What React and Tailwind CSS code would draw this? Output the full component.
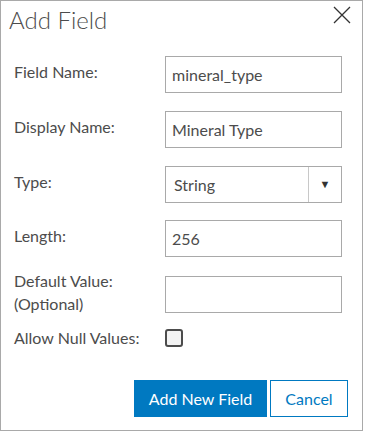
import React, { useState } from "react";

function Row({ label, children, className = "" }) {
  return (
    <div className={`flex items-center h-[37px] ${className}`}>
      <label className="w-[164px] shrink-0 pb-[6px] pl-[13px] text-[16px] leading-[23px] text-[#4c4c4c]">
        {label}
      </label>
      {children}
    </div>
  );
}

function TextInput({ value }) {
  return (
    <input
      type="text"
      defaultValue={value}
      className="w-[177px] h-[37px] border border-[#a9a9a9] bg-white px-[6px] text-[16px] text-[#4c4c4c] outline-none"
    />
  );
}

export default function App() {
  const [allowNull, setAllowNull] = useState(false);

  return (
    <div
      className="w-[363px] h-[431px] bg-white border border-[#a9a9a9] relative"
      style={{ fontFamily: "Lato, 'Open Sans', sans-serif" }}
    >
      <div className="flex items-start justify-between h-[35px]">
        <h2 className="pl-[8px] pt-[3px] text-[24px] leading-[32px] text-[#4c4c4c] font-light">
          Add Field
        </h2>
        <button className="mr-[10px] mt-[4px] text-[#4c4c4c]">
          <svg width="20" height="20" viewBox="0 0 20 20" fill="none" stroke="#333" strokeWidth="1.3">
            <path d="M2 2 L18 18 M18 2 L2 18" />
          </svg>
        </button>
      </div>

      <div className="mt-[20px] flex flex-col">
        <Row label="Field Name:">
          <TextInput value="mineral_type" />
        </Row>
        <Row label="Display Name:" className="mt-[18px]">
          <TextInput value="Mineral Type" />
        </Row>
        <Row label="Type:" className="mt-[18px]">
          <div className="w-[177px] h-[37px] border border-[#a9a9a9] flex text-[16px] text-[#4c4c4c]">
            <div className="flex-1 flex items-center px-[8px]">String</div>
            <div className="w-[33px] border-l border-[#c8c8c8] flex items-center justify-center text-[11px] text-[#333]">
              ▼
            </div>
          </div>
        </Row>
        <Row label="Length:" className="mt-[17px]">
          <TextInput value="256" />
        </Row>
        <Row label={<>Default Value:<br />(Optional)</>} className="mt-[19px]">
          <TextInput value="" />
        </Row>
        <div className="flex items-center h-[18px] mt-[16px]">
          <span className="w-[164px] shrink-0 pl-[13px] text-[16px] leading-[22px] text-[#4c4c4c]">
            Allow Null Values:
          </span>
          <button
            onClick={() => setAllowNull(!allowNull)}
            className="w-[18px] h-[18px] rounded-[3px] border-2 border-[#4c4c4c] bg-[#f3f3f3]"
          />
        </div>
      </div>

      <div className="flex justify-end gap-[3px] pr-[14px] mt-[33px]">
        <button className="w-[133px] h-[37px] bg-[#0079c1] text-white text-[16px]">
          Add New Field
        </button>
        <button className="w-[78px] h-[37px] border border-[#0079c1] text-[#0079c1] text-[16px] bg-white">
          Cancel
        </button>
      </div>
    </div>
  );
}
